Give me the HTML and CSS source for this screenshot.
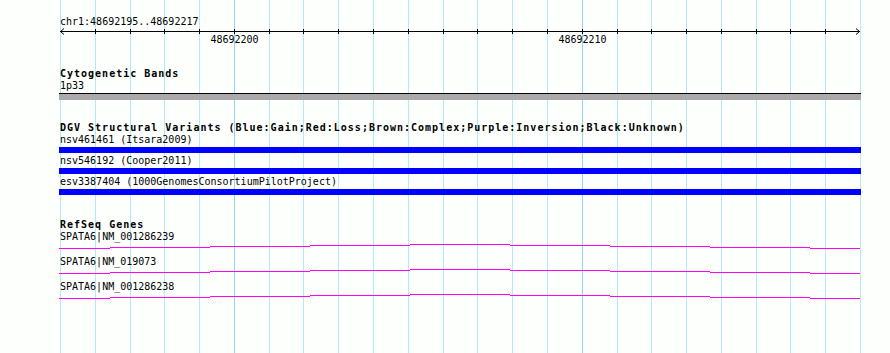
FILE: index.html
```html
<!DOCTYPE html>
<html>
<head>
<meta charset="UTF-8">
<title>chr1:48692195..48692217</title>
<link rel="stylesheet" href="styles.css">
</head>
<body>
<div class="view">
  <!-- grid behind the tracks, one line per base -->
  <svg class="grid" width="890" height="353" viewBox="0 0 890 353">
    <g fill="#b3ebf1">
      <rect x="60" y="0" width="1" height="353"/>
      <rect x="95" y="0" width="1" height="353"/>
      <rect x="130" y="0" width="1" height="353"/>
      <rect x="164" y="0" width="1" height="353"/>
      <rect x="199" y="0" width="1" height="353"/>
      <rect x="269" y="0" width="1" height="353"/>
      <rect x="303" y="0" width="1" height="353"/>
      <rect x="338" y="0" width="1" height="353"/>
      <rect x="373" y="0" width="1" height="353"/>
      <rect x="408" y="0" width="1" height="353"/>
      <rect x="443" y="0" width="1" height="353"/>
      <rect x="477" y="0" width="1" height="353"/>
      <rect x="512" y="0" width="1" height="353"/>
      <rect x="547" y="0" width="1" height="353"/>
      <rect x="617" y="0" width="1" height="353"/>
      <rect x="651" y="0" width="1" height="353"/>
      <rect x="686" y="0" width="1" height="353"/>
      <rect x="721" y="0" width="1" height="353"/>
      <rect x="756" y="0" width="1" height="353"/>
      <rect x="790" y="0" width="1" height="353"/>
      <rect x="825" y="0" width="1" height="353"/>
      <rect x="860" y="0" width="1" height="353"/>
    </g>
    <g fill="#90d6ee">
      <rect x="234" y="0" width="1" height="353"/>
      <rect x="582" y="0" width="1" height="353"/>
    </g>
  </svg>

  <div class="tracks">
    <div class="loc">chr1:48692195..48692217</div>

    <svg class="ruler" width="802" height="18" viewBox="0 0 802 18">
      <path d="M1 3.5H801" stroke="#000" stroke-width="1" fill="none"/>
      <path d="M5 0.5L1.5 3.5L5 6.5M797 0.5L800.5 3.5L797 6.5" stroke="#000" stroke-width="1" fill="none"/>
      <g fill="#000">
        <rect x="36" y="1" width="1" height="5"/>
        <rect x="71" y="1" width="1" height="5"/>
        <rect x="105" y="1" width="1" height="5"/>
        <rect x="140" y="1" width="1" height="5"/>
        <rect x="175" y="1" width="1" height="5"/>
        <rect x="210" y="1" width="1" height="5"/>
        <rect x="244" y="1" width="1" height="5"/>
        <rect x="279" y="1" width="1" height="5"/>
        <rect x="314" y="1" width="1" height="5"/>
        <rect x="349" y="1" width="1" height="5"/>
        <rect x="384" y="1" width="1" height="5"/>
        <rect x="418" y="1" width="1" height="5"/>
        <rect x="453" y="1" width="1" height="5"/>
        <rect x="488" y="1" width="1" height="5"/>
        <rect x="523" y="1" width="1" height="5"/>
        <rect x="558" y="1" width="1" height="5"/>
        <rect x="592" y="1" width="1" height="5"/>
        <rect x="627" y="1" width="1" height="5"/>
        <rect x="662" y="1" width="1" height="5"/>
        <rect x="697" y="1" width="1" height="5"/>
        <rect x="731" y="1" width="1" height="5"/>
        <rect x="766" y="1" width="1" height="5"/>
      </g>
      <text class="tick-lbl" x="175.5" y="15" text-anchor="middle">48692200</text>
      <text class="tick-lbl" x="523.5" y="15" text-anchor="middle">48692210</text>
    </svg>

    <section class="track">
      <h2 class="track-name">Cytogenetic Bands</h2>
      <div class="feat">
        <div class="lbl">1p33</div>
        <div class="band"></div>
      </div>
    </section>

    <section class="track">
      <h2 class="track-name">DGV Structural Variants (Blue:Gain;Red:Loss;Brown:Complex;Purple:Inversion;Black:Unknown)</h2>
      <div class="feat">
        <div class="lbl">nsv461461 (Itsara2009)</div>
        <div class="sv"></div>
      </div>
      <div class="feat">
        <div class="lbl">nsv546192 (Cooper2011)</div>
        <div class="sv"></div>
      </div>
      <div class="feat">
        <div class="lbl">esv3387404 (1000GenomesConsortiumPilotProject)</div>
        <div class="sv"></div>
      </div>
    </section>

    <section class="track">
      <h2 class="track-name">RefSeq Genes</h2>
      <div class="gene">
        <div class="lbl">SPATA6|NM_001286239</div>
        <svg class="intron" width="802" height="13" viewBox="0 0 802 13">
          <path d="M0 5.5H51M51 4.5H151M151 3.5H251M251 2.5H351M351 1.5H451M451 2.5H551M551 3.5H651M651 4.5H751M751 5.5H801"/>
        </svg>
      </div>
      <div class="gene">
        <div class="lbl">SPATA6|NM_019073</div>
        <svg class="intron" width="802" height="13" viewBox="0 0 802 13">
          <path d="M0 5.5H51M51 4.5H151M151 3.5H251M251 2.5H351M351 1.5H451M451 2.5H551M551 3.5H651M651 4.5H751M751 5.5H801"/>
        </svg>
      </div>
      <div class="gene">
        <div class="lbl">SPATA6|NM_001286238</div>
        <svg class="intron" width="802" height="13" viewBox="0 0 802 13">
          <path d="M0 5.5H51M51 4.5H151M151 3.5H251M251 2.5H351M351 1.5H451M451 2.5H551M551 3.5H651M651 4.5H751M751 5.5H801"/>
        </svg>
      </div>
    </section>
  </div>
</div>
</body>
</html>
```

FILE: styles.css
```css
* {
    box-sizing: border-box;
    margin: 0;
    padding: 0;
}

body {
    margin: 0;
    background-color: #fdfffd;
    font-family: "DejaVu Sans Mono", "Liberation Mono", monospace;
    font-size: 10px;
    line-height: 12px;
    color: #000;
}

.view {
    position: relative;
    width: 890px;
    height: 353px;
    overflow: hidden;
}

.grid {
    position: absolute;
    left: 0;
    top: 0;
    z-index: 0;
}

.tracks {
    position: relative;
    z-index: 1;
    margin-left: 59px;
    width: 802px;
    display: flex;
    flex-direction: column;
}

.loc {
    margin-top: 16px;
    padding-left: 1px;
    height: 12px;
    white-space: nowrap;
}

.ruler {
    display: block;
}

.tick-lbl {
    font-family: "DejaVu Sans Mono", "Liberation Mono", monospace;
    font-size: 10px;
    fill: #000;
}

.track {
    margin-top: 22px;
}

.track-name {
    font-size: 10px;
    font-weight: bold;
    line-height: 12px;
    letter-spacing: 1px;
    padding-left: 1px;
    white-space: nowrap;
}

.lbl {
    height: 12px;
    padding-left: 1px;
    white-space: nowrap;
}

.band {
    margin-top: 1px;
    height: 7px;
    border-top: 1px solid #000;
    background-color: #aba9ab;
}

.sv {
    margin-top: 1px;
    margin-bottom: 2px;
    height: 6px;
    background-color: #0000ff;
}

.gene .intron {
    display: block;
}

.intron path {
    fill: none;
    stroke: #ff00ff;
    stroke-width: 1;
}
```
